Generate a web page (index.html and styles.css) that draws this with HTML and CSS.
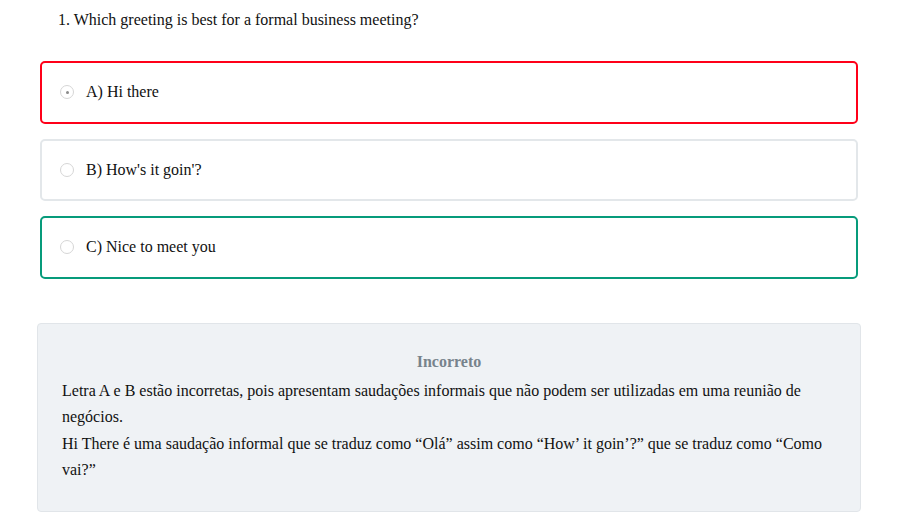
FILE: index.html
```html
<!DOCTYPE html>
<html lang="pt-BR">
<head>
  <meta charset="UTF-8" />
  <title>Quiz</title>
  <link rel="stylesheet" href="styles.css">
</head>
<body>
  <div class="quiz">
    <p class="question">1. Which greeting is best for a formal business meeting?</p>

    <!-- opções -->
    <div class="options">
      <label class="option wrong">
        <span class="radio checked"></span>
        <span>A) Hi there</span>
      </label>
      <label class="option">
        <span class="radio"></span>
        <span>B) How's it goin'?</span>
      </label>
      <label class="option right">
        <span class="radio"></span>
        <span>C) Nice to meet you</span>
      </label>
    </div>

    <!-- feedback -->
    <section class="feedback">
      <h3>Incorreto</h3>
      <p>Letra A e B estão incorretas, pois apresentam saudações informais que não podem ser utilizadas em uma reunião de negócios.<br>
      Hi There é uma saudação informal que se traduz como “Olá” assim como “How’ it goin’?” que se traduz como “Como vai?”</p>
    </section>
  </div>
</body>
</html>
```

FILE: styles.css
```css
body {
  margin: 0;
  font-family: "Liberation Serif", "Times New Roman", serif;
  font-size: 16px;
  color: #111;
  background: white;
}
.quiz {
  width: 824px;
  padding: 0 37px;
}
.question {
  margin: 11px 0 0 21px;
  line-height: 18px;
}
.options {
  display: flex;
  flex-direction: column;
  gap: 15px;
  margin: 32px 3px 0;
}
.option {
  display: flex;
  align-items: center;
  gap: 12px;
  height: 58.5px;
  padding: 0 18px;
  border: 2px solid #e3e7ea;
  border-radius: 5px;
}
.option.wrong {
  border-color: #ff0019;
}
.option.right {
  border-color: #079b7b;
}
.radio {
  width: 12px;
  height: 12px;
  border: 1px solid #d6d6d6;
  border-radius: 50%;
  background: white;
  position: relative;
}
.radio.checked::after {
  content: "";
  position: absolute;
  left: 4.5px;
  top: 4.5px;
  width: 3px;
  height: 3px;
  border-radius: 50%;
  background: #8a8a8a;
}
.feedback {
  margin-top: 44px;
  padding: 28px 24px 27px;
  background: #eff2f5;
  border: 1px solid #e1e5e9;
  border-radius: 4px;
}
.feedback h3 {
  margin: 0;
  text-align: center;
  font-size: 16px;
  color: #77838c;
  line-height: 20px;
}
.feedback p {
  margin: 6px 0 0;
  line-height: 26.5px;
}
```
